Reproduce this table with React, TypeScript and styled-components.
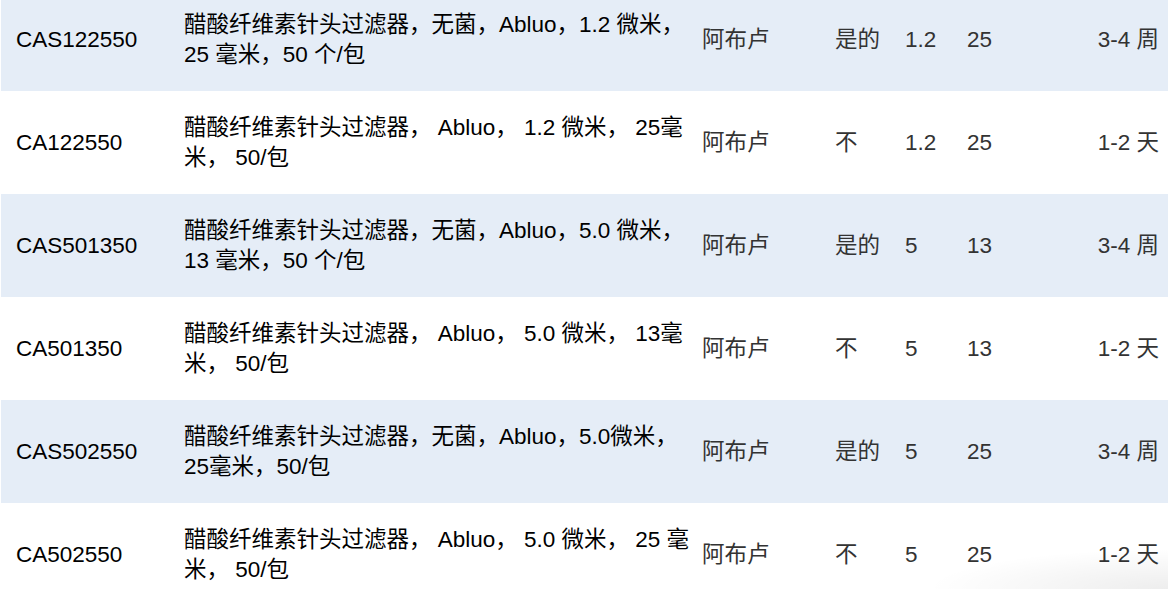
import React from 'react';
import styled, { createGlobalStyle } from 'styled-components';

const GlobalStyle = createGlobalStyle`
  html, body {
    margin: 0;
    padding: 0;
    background: #fff;
    overflow: hidden;
  }
  body {
    font-family: "Liberation Sans", Arial, "Noto Sans CJK SC", sans-serif;
  }
`;

interface Product {
  code: string;
  desc: [string, string];
  brand: string;
  sterile: string;
  pore: string;
  diameter: string;
  lead: string;
}

const products: Product[] = [
  {
    code: 'CAS122550',
    desc: ['醋酸纤维素针头过滤器，无菌，Abluo，1.2 微米，', '25 毫米，50 个/包'],
    brand: '阿布卢',
    sterile: '是的',
    pore: '1.2',
    diameter: '25',
    lead: '3-4 周',
  },
  {
    code: 'CA122550',
    desc: ['醋酸纤维素针头过滤器， Abluo， 1.2 微米， 25毫', '米， 50/包'],
    brand: '阿布卢',
    sterile: '不',
    pore: '1.2',
    diameter: '25',
    lead: '1-2 天',
  },
  {
    code: 'CAS501350',
    desc: ['醋酸纤维素针头过滤器，无菌，Abluo，5.0 微米，', '13 毫米，50 个/包'],
    brand: '阿布卢',
    sterile: '是的',
    pore: '5',
    diameter: '13',
    lead: '3-4 周',
  },
  {
    code: 'CA501350',
    desc: ['醋酸纤维素针头过滤器， Abluo， 5.0 微米， 13毫', '米， 50/包'],
    brand: '阿布卢',
    sterile: '不',
    pore: '5',
    diameter: '13',
    lead: '1-2 天',
  },
  {
    code: 'CAS502550',
    desc: ['醋酸纤维素针头过滤器，无菌，Abluo，5.0微米，', '25毫米，50/包'],
    brand: '阿布卢',
    sterile: '是的',
    pore: '5',
    diameter: '25',
    lead: '3-4 周',
  },
  {
    code: 'CA502550',
    desc: ['醋酸纤维素针头过滤器， Abluo， 5.0 微米， 25 毫', '米， 50/包'],
    brand: '阿布卢',
    sterile: '不',
    pore: '5',
    diameter: '25',
    lead: '1-2 天',
  },
];

const Page = styled.div`
  position: relative;
  width: 1168px;
  height: 589px;
  overflow: hidden;
`;

const Table = styled.table`
  margin: -12px 0 0 1px;
  width: 1167px;
  border-collapse: collapse;
  table-layout: fixed;
  font-size: 22.5px;
  line-height: 30px;
`;

const Row = styled.tr<{ $shaded: boolean }>`
  background: ${({ $shaded }) => ($shaded ? '#e5edf7' : '#ffffff')};
`;

const Cell = styled.td<{ $dark?: boolean; $right?: boolean; $first?: boolean }>`
  padding: 21.5px ${({ $right }) => ($right ? '9px' : '0')} 21.5px ${({ $first }) => ($first ? '15px' : '8px')};
  vertical-align: middle;
  white-space: nowrap;
  overflow: hidden;
  text-align: ${({ $right }) => ($right ? 'right' : 'left')};
  color: ${({ $dark }) => ($dark ? '#000' : '#333')};
`;

const CornerShade = styled.div`
  position: absolute;
  right: 0;
  bottom: 0;
  width: 300px;
  height: 60px;
  pointer-events: none;
  background: radial-gradient(ellipse 240px 40px at 100% 100%, rgba(0, 0, 0, 0.07), rgba(0, 0, 0, 0));
`;

const widths = [175, 518, 133, 70, 62, 70, 139];

export default function App() {
  return (
    <Page>
      <GlobalStyle />
      <Table>
        <colgroup>
          {widths.map((w, i) => (
            <col key={i} style={{ width: w }} />
          ))}
        </colgroup>
        <tbody>
          {products.map((p, i) => (
            <Row key={p.code} $shaded={i % 2 === 0}>
              <Cell $dark $first>{p.code}</Cell>
              <Cell $dark>
                {p.desc[0]}
                <br />
                {p.desc[1]}
              </Cell>
              <Cell>{p.brand}</Cell>
              <Cell>{p.sterile}</Cell>
              <Cell>{p.pore}</Cell>
              <Cell>{p.diameter}</Cell>
              <Cell $right>{p.lead}</Cell>
            </Row>
          ))}
        </tbody>
      </Table>
      <CornerShade />
    </Page>
  );
}
